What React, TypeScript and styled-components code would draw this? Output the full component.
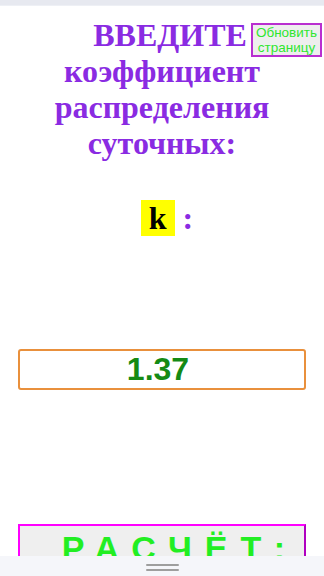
import React, { useEffect, useRef } from "react";
import styled, { createGlobalStyle } from "styled-components";

const Global = createGlobalStyle`
  html, body { margin: 0; padding: 0; background: #ffffff; }
  body { font-family: "Liberation Serif", "Times New Roman", serif; }
  * { box-sizing: border-box; }
`;

const Page = styled.div`
  position: relative;
  width: 324px;
  min-height: 576px;
  display: flex;
  flex-direction: column;
`;

const TopBar = styled.div`
  height: 6px;
  background: #e7e9f0;
  border-bottom: 1px solid #eef0f5;
`;

const Title = styled.h1`
  margin: 11px 0 0;
  font-family: "Liberation Serif", "Times New Roman", serif;
  font-size: 32px;
  line-height: 36px;
  font-weight: bold;
  color: #8a2be2;
  text-align: center;
`;

const TitleLead = styled.span`
  display: block;
  padding-left: 16px;
`;

const TitleLine = styled.span`
  display: block;
`;

const RefreshButton = styled.button`
  position: absolute;
  top: 23px;
  right: 2px;
  width: 71px;
  height: 34px;
  padding: 0;
  border: 2px solid #b92fd0;
  background: #eeeeee;
  color: #2fe62f;
  font-family: "Liberation Sans", Arial, sans-serif;
  font-size: 13.5px;
  line-height: 15px;
  text-align: center;
`;

const VarLine = styled.div`
  margin-top: 39px;
  font-family: "Liberation Serif", "Times New Roman", serif;
  font-size: 32px;
  line-height: 36px;
  font-weight: bold;
  text-align: center;
  padding-left: 10px;
`;

const VarName = styled.span`
  background: #ffff00;
  color: #000000;
  padding: 0 8px;
`;

const Colon = styled.span`
  color: #8a2be2;
  margin-left: 8px;
`;

const ValueInput = styled.input`
  display: block;
  margin: 113px 18px 0;
  width: 288px;
  height: 41px;
  border: 2px solid #e9903c;
  border-radius: 3px;
  outline: none;
  background: #ffffff;
  color: #148a14;
  caret-color: #148a14;
  font-family: "Liberation Sans", Arial, sans-serif;
  font-size: 32px;
  font-weight: bold;
  text-align: center;
  padding: 0 8px 0 0;
`;

const CalcButton = styled.button`
  margin: 134px 18px 0;
  width: 288px;
  height: 62px;
  border: 2px solid #ff00ff;
  border-right-color: #b000c0;
  background: #efefef;
  color: #22ee22;
  font-family: "Liberation Sans", Arial, sans-serif;
  font-size: 34px;
  font-weight: bold;
  letter-spacing: 13px;
  line-height: 36px;
  padding: 4px 0 0 36px;
  display: flex;
  justify-content: center;
  align-items: flex-start;
`;

const BottomBar = styled.div`
  position: fixed;
  left: 0;
  right: 0;
  bottom: 0;
  height: 20px;
  background: #f5f6fa;
  display: flex;
  flex-direction: column;
  align-items: center;
  justify-content: center;
  gap: 3px;
  padding-top: 2px;
`;

const Handle = styled.div`
  width: 33px;
  height: 2px;
  background: #9e9e9e;
  border-radius: 1px;
`;

export default function App() {
  const inputRef = useRef<HTMLInputElement>(null);
  useEffect(() => {
    const el = inputRef.current;
    if (el) {
      el.focus();
      el.setSelectionRange(el.value.length, el.value.length);
    }
  }, []);
  return (
    <>
      <Global />
      <Page>
        <TopBar />
        <Title>
          <TitleLead>ВВЕДИТЕ</TitleLead>
          <TitleLine>коэффициент</TitleLine>
          <TitleLine>распределения</TitleLine>
          <TitleLine>суточных:</TitleLine>
        </Title>
        <RefreshButton>
          Обновить
          <br />
          страницу
        </RefreshButton>
        <VarLine>
          <VarName>k</VarName>
          <Colon>:</Colon>
        </VarLine>
        <ValueInput ref={inputRef} defaultValue="1.37" />
        <CalcButton>РАСЧЁТ:</CalcButton>
        <BottomBar>
          <Handle />
          <Handle />
        </BottomBar>
      </Page>
    </>
  );
}
